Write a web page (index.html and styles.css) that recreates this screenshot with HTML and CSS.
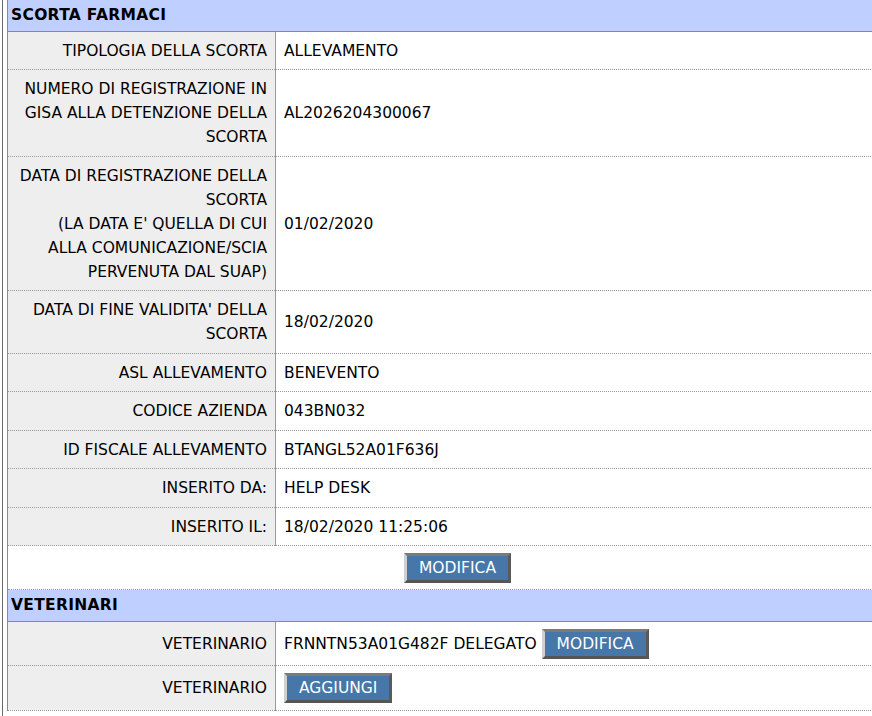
FILE: index.html
```html
<!DOCTYPE html>
<html lang="it">
<head>
<meta charset="utf-8">
<title>Scorta farmaci</title>
<link rel="stylesheet" href="styles.css">
</head>
<body>
<div class="page">
  <table class="details">
    <tr><th colspan="2" class="section">SCORTA FARMACI</th></tr>
    <tr><td class="label">TIPOLOGIA DELLA SCORTA</td><td class="value">ALLEVAMENTO</td></tr>
    <tr><td class="label">NUMERO DI REGISTRAZIONE IN GISA ALLA DETENZIONE DELLA SCORTA</td><td class="value">AL2026204300067</td></tr>
    <tr><td class="label">DATA DI REGISTRAZIONE DELLA SCORTA<br>(LA DATA E' QUELLA DI CUI ALLA COMUNICAZIONE/SCIA PERVENUTA DAL SUAP)</td><td class="value">01/02/2020</td></tr>
    <tr><td class="label">DATA DI FINE VALIDITA' DELLA SCORTA</td><td class="value">18/02/2020</td></tr>
    <tr><td class="label">ASL ALLEVAMENTO</td><td class="value">BENEVENTO</td></tr>
    <tr><td class="label">CODICE AZIENDA</td><td class="value">043BN032</td></tr>
    <tr><td class="label">ID FISCALE ALLEVAMENTO</td><td class="value">BTANGL52A01F636J</td></tr>
    <tr><td class="label">INSERITO DA:</td><td class="value">HELP DESK</td></tr>
    <tr><td class="label">INSERITO IL:</td><td class="value">18/02/2020 11:25:06</td></tr>
    <tr><td colspan="2" class="actions"><button class="btn" type="button">MODIFICA</button></td></tr>
    <tr><th colspan="2" class="section">VETERINARI</th></tr>
    <tr><td class="label">VETERINARIO</td><td class="value">FRNNTN53A01G482F DELEGATO <button class="btn" type="button">MODIFICA</button></td></tr>
    <tr><td class="label">VETERINARIO</td><td class="value"><button class="btn" type="button">AGGIUNGI</button></td></tr>
  </table>
</div>
</body>
</html>
```
FILE: styles.css
```css
html, body {
  margin: 0;
  padding: 0;
  background: #ffffff;
  overflow: hidden;
}
body {
  font-family: "DejaVu Sans", sans-serif;
  font-size: 15.5px;
  color: #000;
}
.page {
  margin-left: 2px;
  border-left: 1px solid #6a6a6a;
  padding-left: 4px;
  min-height: 716px;
}
.details {
  width: 900px;
  border-collapse: collapse;
  border-left: 1px solid #8a8a8a;
}
.details td, .details th {
  line-height: 24px;
  vertical-align: middle;
}
.section {
  background: #bfcfff;
  text-align: left;
  font-weight: bold;
  letter-spacing: 0.3px;
  padding: 3px 3px 3.5px;
  border-bottom: 1px solid #8a8a8a;
}
.label {
  width: 251px;
  background: #eeeeee;
  text-align: right;
  padding: 7px 8px 6.5px 8px;
  border-right: 1px solid #999;
  border-bottom: 1px dotted #999;
}
.value {
  text-align: left;
  padding: 7px 8px 6.5px;
  border-bottom: 1px dotted #999;
}
.actions {
  text-align: center;
  padding: 7px 8px 6px;
  border-bottom: 1px dotted #999;
}
.btn {
  font-family: inherit;
  font-size: 15.5px;
  color: #ffffff;
  background: #4677a8;
  border-style: solid;
  border-width: 3px;
  border-color: #7a7a7a #5a5a5a #555555 #d0d0d0;
  padding: 1px 12px;
  line-height: 22px;
  vertical-align: middle;
  cursor: pointer;
}
```
